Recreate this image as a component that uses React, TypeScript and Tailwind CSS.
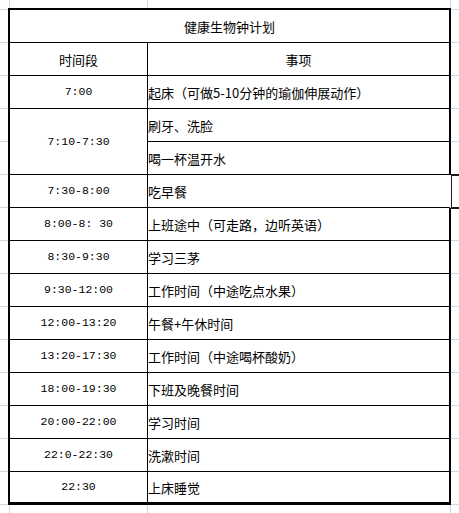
import React from 'react';

type Row = { time?: string; task: string; span?: number; mark?: boolean };

const rows: Row[] = [
  { time: '7:00', task: '起床（可做5-10分钟的瑜伽伸展动作）' },
  { time: '7:10-7:30', task: '刷牙、洗脸', span: 2 },
  { task: '喝一杯温开水' },
  { time: '7:30-8:00', task: '吃早餐', mark: true },
  { time: '8:00-8: 30', task: '上班途中（可走路，边听英语）' },
  { time: '8:30-9:30', task: '学习三茅' },
  { time: '9:30-12:00', task: '工作时间（中途吃点水果）' },
  { time: '12:00-13:20', task: '午餐+午休时间' },
  { time: '13:20-17:30', task: '工作时间（中途喝杯酸奶）' },
  { time: '18:00-19:30', task: '下班及晚餐时间' },
  { time: '20:00-22:00', task: '学习时间' },
  { time: '22:0-22:30', task: '洗漱时间' },
  { time: '22:30', task: '上床睡觉' },
];

const cjk = "font-['Noto_Sans_CJK_SC',sans-serif] text-[13px] leading-none";
const mono = "font-['Liberation_Mono','DejaVu_Sans_Mono',monospace] text-[11.5px] leading-none whitespace-pre";

export default function App() {
  const last = rows.length - 1;
  return (
    <div className="w-[459px] h-[513px] overflow-hidden bg-white pt-2 pl-2 text-black bg-[linear-gradient(to_right,transparent_9px,#d0d7e5_9px,#d0d7e5_10px,transparent_10px,transparent_147px,#d0d7e5_147px,#d0d7e5_148px,transparent_148px,transparent_450px,#d0d7e5_450px,#d0d7e5_451px,transparent_451px),repeating-linear-gradient(to_bottom,transparent_0px,transparent_9px,#d0d7e5_9px,#d0d7e5_10px,transparent_10px,transparent_33px)]">
      <div className="w-[443px] bg-white border-black border-t-2 border-l-2 border-b-[3px] grid grid-cols-[138px_303px] grid-rows-[repeat(14,33px)_30px]">
        {/* title */}
        <div className={`col-span-2 flex items-center justify-center border-b border-r-2 border-black ${cjk}`}>
          健康生物钟计划
        </div>

        {/* header */}
        <div className={`flex items-center justify-center border-b border-r border-black ${cjk}`}>时间段</div>
        <div className={`flex items-center justify-center border-b border-r-2 border-black ${cjk}`}>事项</div>

        {rows.map((r, i) => {
          const bottom = i === last ? '' : 'border-b';
          return (
            <React.Fragment key={i}>
              {r.time !== undefined && (
                <div
                  className={`flex items-center justify-center border-r border-black ${bottom} ${mono} ${
                    r.span === 2 ? 'row-span-2' : ''
                  }`}
                >
                  {r.time}
                </div>
              )}
              <div
                className={`relative flex items-center border-black border-r-2 ${bottom} ${cjk} ${
                  r.mark ? 'border-r-transparent' : ''
                }`}
              >
                {r.task}
                {r.mark && (
                  <div className="absolute top-[-1px] left-[calc(100%+2px)] w-[8px] h-[35px] border-t-2 border-b-2 border-l border-[#221c19]" />
                )}
              </div>
            </React.Fragment>
          );
        })}
      </div>
    </div>
  );
}
